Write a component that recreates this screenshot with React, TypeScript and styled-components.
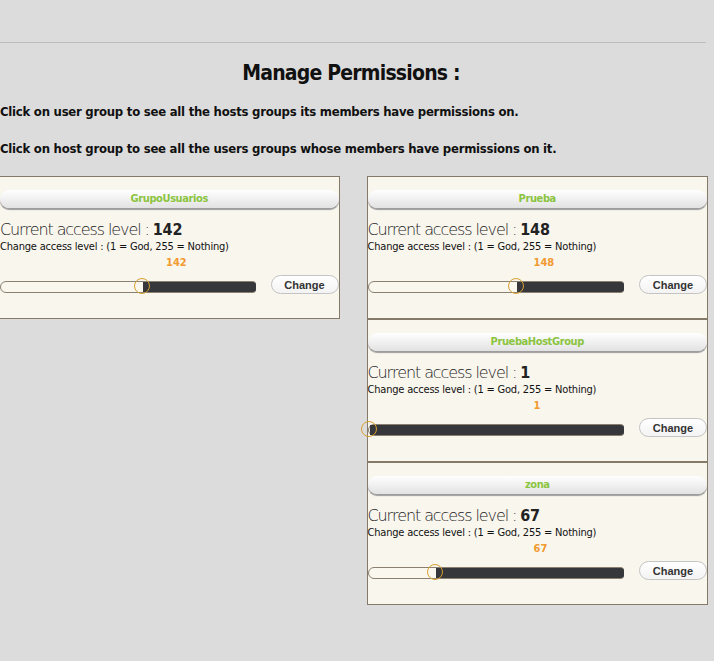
import React from 'react'
import styled, { createGlobalStyle } from 'styled-components'

const GlobalStyle = createGlobalStyle`
  html, body {
    margin: 0;
    padding: 0;
    background: #dcdcdc;
  }
  body {
    font-family: "DejaVu Sans Condensed", "DejaVu Sans", sans-serif;
    color: #111;
  }
`

const Page = styled.div`
  width: 708px;
  padding-top: 42px;
`

const Rule = styled.hr`
  margin: 0;
  border: 0;
  border-top: 1px solid #bdbdbd;
  width: 706px;
`

const Title = styled.h1`
  margin: 16px 0 0;
  padding-right: 6px;
  text-align: center;
  font-size: 21px;
  line-height: 28px;
  font-weight: bold;
  letter-spacing: -0.8px;
`

const Hint = styled.p`
  margin: 0;
  font-size: 13px;
  line-height: 16px;
  font-weight: bold;
  letter-spacing: -0.25px;
  margin-top: ${(p: { $top: number }) => p.$top}px;
`

const Columns = styled.div`
  display: flex;
  align-items: flex-start;
  gap: 27px;
  margin-top: 19px;
  margin-left: -1px;
`

const Column = styled.div`
  display: flex;
  flex-direction: column;
  width: ${(p: { $width: number }) => p.$width}px;
`

const Card = styled.section`
  box-sizing: border-box;
  height: 143px;
  border: 1px solid #85796a;
  background: #f9f6ee;
  padding-top: 13px;
`

const HeaderBar = styled.div`
  height: 18px;
  border-radius: 9px;
  background: linear-gradient(#ffffff, #efefef 55%, #e2e2e2);
  box-shadow: 0 2px 1px #9d9d9d;
  text-align: center;
  font-size: 11px;
  line-height: 18px;
  font-weight: bold;
  letter-spacing: -0.4px;
  color: #8bc440;
`

const Current = styled.div`
  margin-top: 12px;
  font-family: "DejaVu Sans", sans-serif;
  font-weight: 200;
  font-size: 16px;
  line-height: 20px;
  letter-spacing: -1.1px;
  color: #222;
  b {
    font-family: "DejaVu Sans Condensed", "DejaVu Sans", sans-serif;
    font-weight: bold;
    letter-spacing: -0.2px;
  }
`

const Note = styled.div`
  font-size: 11px;
  line-height: 14px;
  letter-spacing: -0.2px;
  color: #111;
`

const Value = styled.div`
  margin-top: 2px;
  padding-left: 166px;
  font-size: 11px;
  line-height: 14px;
  font-weight: bold;
  color: #f09a30;
`

const Controls = styled.div`
  display: flex;
  align-items: center;
  justify-content: space-between;
  margin-top: 5px;
`

const Track = styled.div`
  position: relative;
  box-sizing: border-box;
  width: 256px;
  height: 12px;
  border: 1px solid #8b8070;
  border-radius: 6px 3px 3px 6px;
  background: #faf7ef;
  margin-top: 5px;
`

const Fill = styled.div`
  position: absolute;
  top: 0;
  bottom: 0;
  right: -1px;
  background: #35373a;
  border-radius: 0 3px 3px 0;
`

const Thumb = styled.div`
  position: absolute;
  top: 50%;
  margin: -9px 0 0 -9px;
  border: 1.5px solid #d6a031;
  border-radius: 50%;
  box-sizing: content-box;
  width: 14px;
  height: 14px;
`

const ChangeButton = styled.button`
  height: 19px;
  width: 68px;
  padding: 0;
  border: 1px solid #c4c4c4;
  border-radius: 10px;
  background: linear-gradient(#ffffff, #f3f3f3);
  font-family: "Liberation Sans", Arial, sans-serif;
  font-size: 11px;
  font-weight: bold;
  color: #333;
`

type Group = { name: string; level: number }

const GroupCard = ({ name, level }: Group) => (
  <Card>
    <HeaderBar>{name}</HeaderBar>
    <Current>
      Current access level : <b>{level}</b>
    </Current>
    <Note>Change access level : (1 = God, 255 = Nothing)</Note>
    <Value>{level}</Value>
    <Controls>
      <Track>
        <Fill style={{ left: level }} />
        <Thumb style={{ left: level }} />
      </Track>
      <ChangeButton>Change</ChangeButton>
    </Controls>
  </Card>
)

const userGroups: Group[] = [{ name: 'GrupoUsuarios', level: 142 }]
const hostGroups: Group[] = [
  { name: 'Prueba', level: 148 },
  { name: 'PruebaHostGroup', level: 1 },
  { name: 'zona', level: 67 },
]

export default function App() {
  return (
    <Page>
      <GlobalStyle />
      <Rule />
      <Title>Manage Permissions :</Title>
      <Hint $top={17}>Click on user group to see all the hosts groups its members have permissions on.</Hint>
      <Hint $top={21}>Click on host group to see all the users groups whose members have permissions on it.</Hint>
      <Columns>
        <Column $width={341}>
          {userGroups.map((g) => (
            <GroupCard key={g.name} {...g} />
          ))}
        </Column>
        <Column $width={342}>
          {hostGroups.map((g) => (
            <GroupCard key={g.name} {...g} />
          ))}
        </Column>
      </Columns>
    </Page>
  )
}
